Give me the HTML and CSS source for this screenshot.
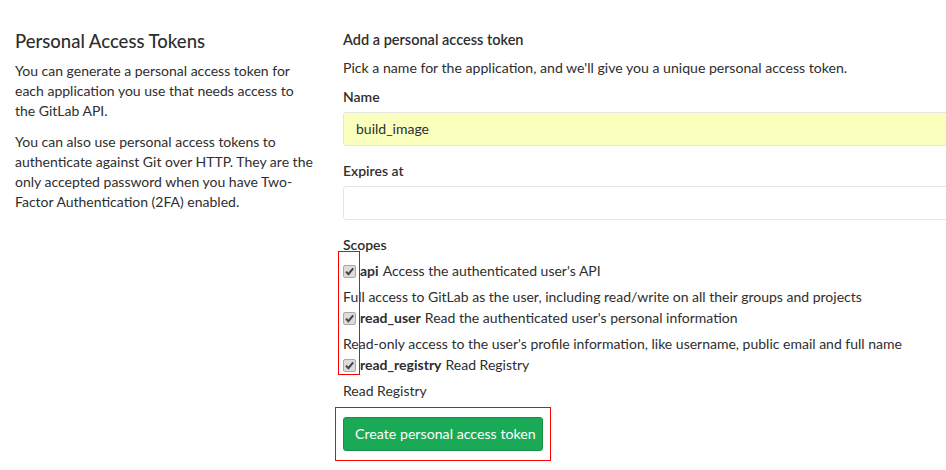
FILE: index.html
```html
<!DOCTYPE html>
<html lang="en">
<head>
<meta charset="utf-8">
<title>Personal Access Tokens</title>
<link rel="stylesheet" href="styles.css">
</head>
<body>
<div class="page">
  <aside class="intro">
    <h4 class="intro-title">Personal Access Tokens</h4>
    <p>You can generate a personal access token for each application you use that needs access to the GitLab API.</p>
    <p>You can also use personal access tokens to authenticate against Git over HTTP. They are the only accepted password when you have Two-Factor Authentication (2FA) enabled.</p>
  </aside>
  <form class="token-form">
    <h5 class="form-title">Add a personal access token</h5>
    <p class="form-help">Pick a name for the application, and we'll give you a unique personal access token.</p>
    <div class="field">
      <label class="label">Name</label>
      <div class="input autofill">build_image</div>
    </div>
    <div class="field">
      <label class="label">Expires at</label>
      <div class="input"></div>
    </div>
    <div class="scopes">
      <label class="label">Scopes</label>
      <div class="scope-list">
        <span class="mark mark-boxes"></span>
        <div class="scope">
          <div class="scope-row"><span class="check"><svg viewBox="0 0 13 13" width="13" height="13"><path d="M3 6.6 L5.4 9.2 L10.2 3.4" fill="none" stroke="#444" stroke-width="2"/></svg></span><b>api</b> Access the authenticated user's API</div>
          <p class="scope-desc">Full access to GitLab as the user, including read/write on all their groups and projects</p>
        </div>
        <div class="scope">
          <div class="scope-row"><span class="check"><svg viewBox="0 0 13 13" width="13" height="13"><path d="M3 6.6 L5.4 9.2 L10.2 3.4" fill="none" stroke="#444" stroke-width="2"/></svg></span><b>read_user</b> Read the authenticated user's personal information</div>
          <p class="scope-desc">Read-only access to the user's profile information, like username, public email and full name</p>
        </div>
        <div class="scope">
          <div class="scope-row"><span class="check"><svg viewBox="0 0 13 13" width="13" height="13"><path d="M3 6.6 L5.4 9.2 L10.2 3.4" fill="none" stroke="#444" stroke-width="2"/></svg></span><b>read_registry</b> Read Registry</div>
          <p class="scope-desc">Read Registry</p>
        </div>
      </div>
    </div>
    <div class="actions">
      <span class="mark mark-button"></span>
      <button type="button" class="btn-create">Create personal access token</button>
    </div>
  </form>
</div>
</body>
</html>
```
FILE: styles.css
```css
html, body {
  margin: 0;
  padding: 0;
  background: #fff;
  overflow: hidden;
}
body {
  font-family: "Segoe UI", Lato, "Noto Sans", sans-serif;
  font-size: 14px;
  color: #2e2e2e;
  width: 946px;
  height: 470px;
}
.page {
  display: grid;
  grid-template-columns: 298px 588px;
  column-gap: 30px;
  padding: 0 0 0 15px;
  width: 931px;
  overflow: hidden;
}
.intro-title {
  margin: 30px 0 0;
  font-size: 18.5px;
  font-weight: 500;
  line-height: 22px;
  color: #2e2e2e;
}
.intro p {
  margin: 9px 0 12px;
  line-height: 19.8px;
  color: #2e2e2e;
}
.token-form {
  margin: 0;
  width: 640px;
}
.form-title {
  margin: 30px 0 0;
  font-size: 14.5px;
  font-weight: 600;
  line-height: 20px;
}
.form-help {
  margin: 8px 0 0;
  font-size: 14.1px;
  line-height: 20px;
}
.field {
  margin-top: 9px;
}
.field + .field {
  margin-top: 15px;
}
.label {
  display: block;
  font-weight: 600;
  line-height: 20px;
  margin-bottom: 5px;
}
.input {
  box-sizing: border-box;
  height: 34px;
  border: 1px solid #e5e5e5;
  border-radius: 3px;
  padding: 6px 12px;
  line-height: 20px;
  background: #fff;
}
.input.autofill {
  background: #faffbd;
}
.scopes {
  margin-top: 15px;
}
.scopes .label {
  margin-bottom: 6px;
}
.scope-list {
  position: relative;
}
.scope-row {
  display: flex;
  align-items: center;
  line-height: 20px;
}
.scope-row b {
  font-weight: 700;
  margin-right: 4px;
}
.check {
  box-sizing: border-box;
  width: 13px;
  height: 13px;
  margin-right: 4px;
  border: 1px solid #a8a8a8;
  border-radius: 2px;
  background: #dcdcdc;
  display: inline-flex;
}
.check svg {
  display: block;
  margin: -1px;
}
.scope-desc {
  margin: 6px 0 1px;
  line-height: 20px;
}
.mark {
  position: absolute;
  border: 1px solid #ff0000;
  pointer-events: none;
}
.mark-boxes {
  left: -5px;
  top: -10px;
  width: 20px;
  height: 122px;
}
.actions {
  position: relative;
  margin-top: 16px;
  padding-bottom: 20px;
}
.mark-button {
  left: -8px;
  top: -10px;
  width: 214px;
  height: 52px;
}
.btn-create {
  font-family: inherit;
  font-size: 14.2px;
  color: #fff;
  background: #1aaa55;
  border: 1px solid #168f48;
  border-radius: 3px;
  height: 34px;
  padding: 0 11px;
  line-height: 20px;
  white-space: nowrap;
  width: 200px;
}
```
